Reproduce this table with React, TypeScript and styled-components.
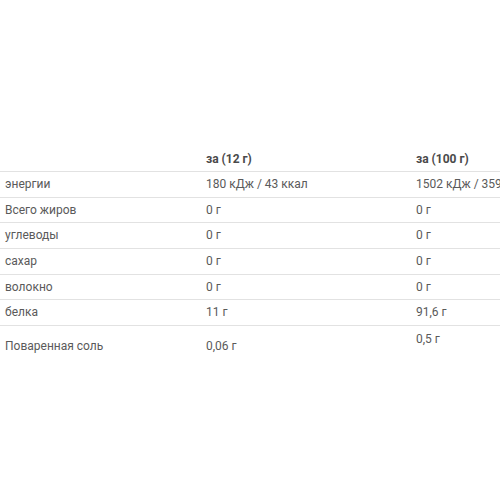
import React from "react";
import styled, { createGlobalStyle } from "styled-components";

const Global = createGlobalStyle`
  html, body { margin: 0; padding: 0; background: #fff; overflow: hidden; }
  body { font-family: Roboto, "Liberation Sans", sans-serif; }
`;

const Page = styled.div`
  width: 500px;
  height: 500px;
  overflow: hidden;
  padding-top: 147px;
  box-sizing: border-box;
`;

const Table = styled.table`
  border-collapse: collapse;
  width: 620px;
  table-layout: fixed;
  font-size: 12px;
  color: #5a5a5a;
`;

const HeadCell = styled.th`
  text-align: left;
  font-weight: 700;
  color: #4a4a4a;
  padding: 5px 5px;
  line-height: 14px;
  border-bottom: 1px solid #e2e2e2;
`;

const Cell = styled.td<{ $last?: boolean }>`
  padding: ${(p) => (p.$last ? "6px 5px" : "5px 5px")};
  line-height: 14px;
  vertical-align: middle;
  white-space: nowrap;
  overflow: hidden;
`;

const Row = styled.tr<{ $last?: boolean }>`
  border-bottom: ${(p) => (p.$last ? "none" : "1px solid #e2e2e2")};
  &:nth-child(3n + 1):not(:last-child) > ${Cell},
  &:nth-child(3n) > ${Cell} {
    padding-bottom: 6px;
  }
`;

const rows: [string, string, string][] = [
  ["энергии", "180 кДж / 43 ккал", "1502 кДж / 359 ккал"],
  ["Всего жиров", "0 г", "0 г"],
  ["углеводы", "0 г", "0 г"],
  ["сахар", "0 г", "0 г"],
  ["волокно", "0 г", "0 г"],
  ["белка", "11 г", "91,6 г"],
];

export default function App() {
  return (
    <>
      <Global />
      <Page>
        <Table>
          <colgroup>
            <col style={{ width: 201 }} />
            <col style={{ width: 210 }} />
            <col style={{ width: 209 }} />
          </colgroup>
          <thead>
            <tr>
              <HeadCell></HeadCell>
              <HeadCell>за (12 г)</HeadCell>
              <HeadCell>за (100 г)</HeadCell>
            </tr>
          </thead>
          <tbody>
            {rows.map((r) => (
              <Row key={r[0]}>
                <Cell>{r[0]}</Cell>
                <Cell>{r[1]}</Cell>
                <Cell>{r[2]}</Cell>
              </Row>
            ))}
            <Row $last>
              <Cell $last>Поваренная соль</Cell>
              <Cell $last>0,06 г</Cell>
              <Cell $last>
                0,5 г
                <br />
                &nbsp;
              </Cell>
            </Row>
          </tbody>
        </Table>
      </Page>
    </>
  );
}
